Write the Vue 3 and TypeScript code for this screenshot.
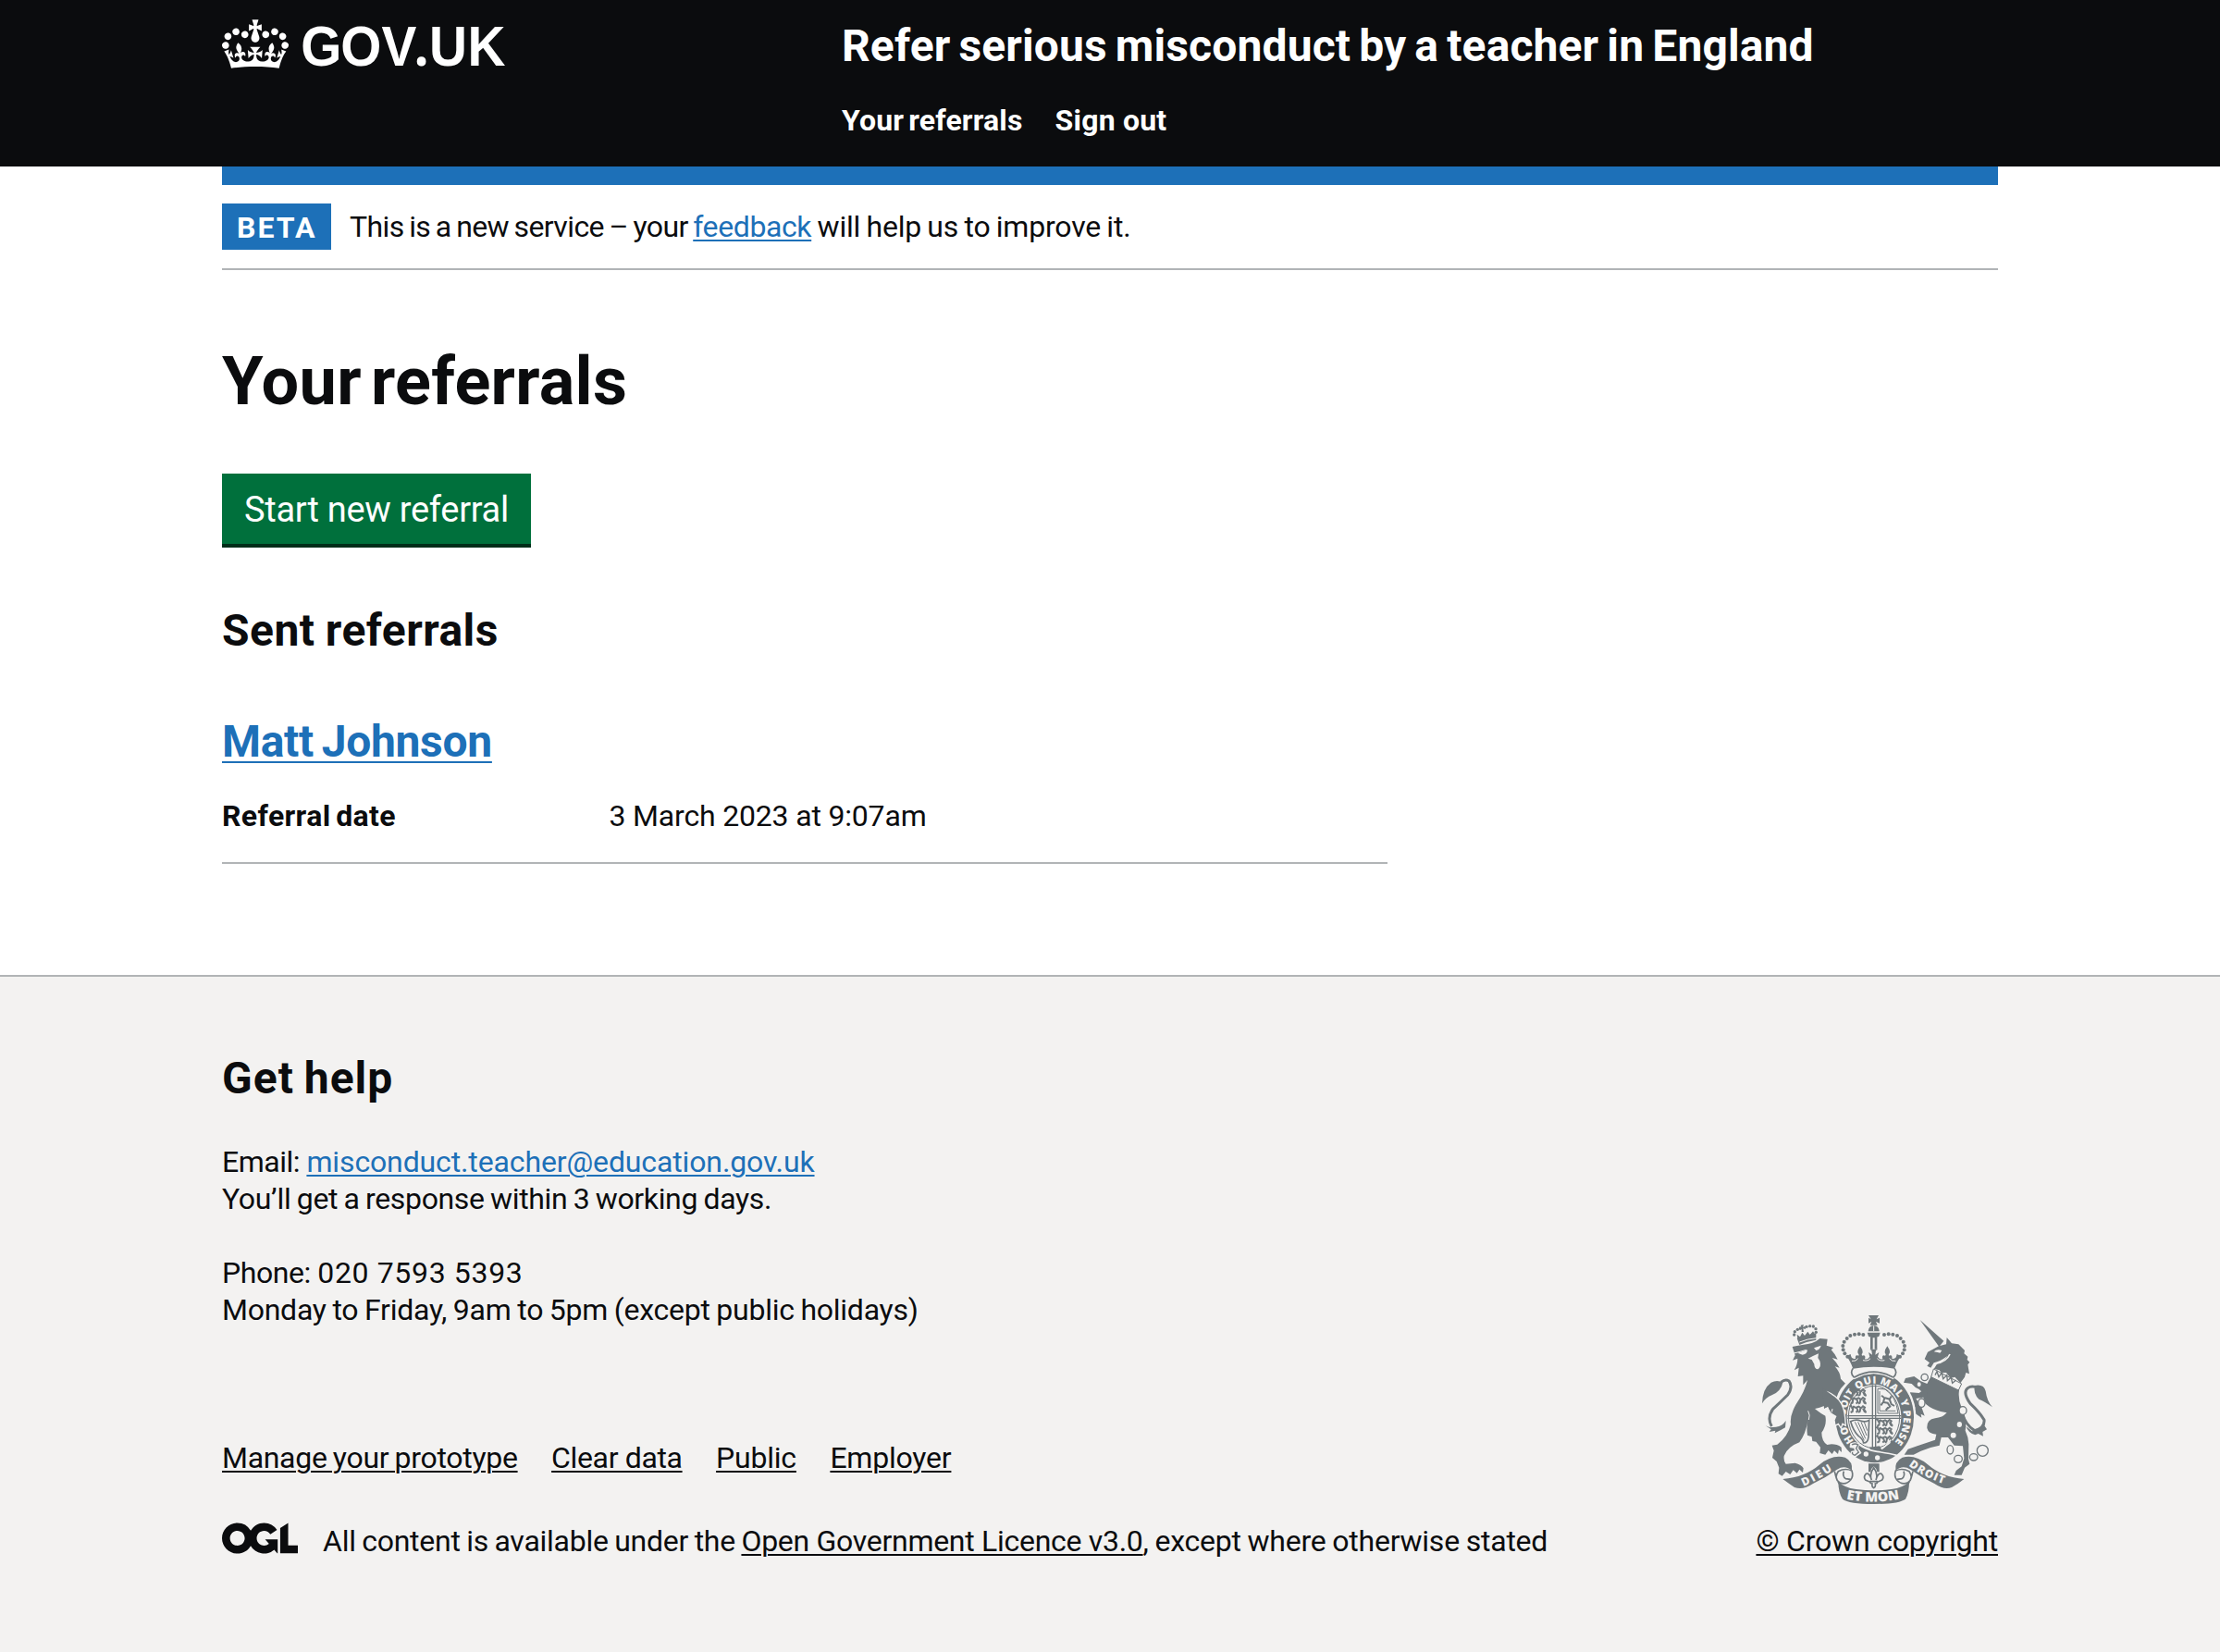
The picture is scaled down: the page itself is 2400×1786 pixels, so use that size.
<script setup lang="ts">
interface FooterLink {
  label: string
  key: string
}

const footerLinks: FooterLink[] = [
  { label: 'Manage your prototype', key: 'manage' },
  { label: 'Clear data', key: 'clear' },
  { label: 'Public', key: 'public' },
  { label: 'Employer', key: 'employer' },
]

// Pearls on the left arch of the royal crown; the right arch mirrors them.
const pearls: [number, number][] = [
  [403, 129], [389, 127], [375, 128], [361, 132], [350, 141],
  [341, 152], [337, 165], [338, 178], [343, 190], [352, 200],
]

const lionPearls: [number, number][] = [
  [179, 129], [181, 119], [190, 112], [230, 101], [241, 102], [249, 110], [250, 121], [199, 108], [219, 103],
]

const passant = [308, 334, 362]
</script>

<template>
  <header class="header">
    <div class="container header-row">
      <svg class="govuk-logo" viewBox="0 0 310 60" width="310" height="60" aria-label="GOV.UK">
        <g transform="translate(0 1.3) scale(.5455)" fill="#fff">
          <path
            d="M25 30.2c3.5 1.5 7.7-.2 9.1-3.7 1.5-3.6-.2-7.8-3.9-9.2-3.6-1.4-7.6.3-9.1 3.9-1.4 3.5.3 7.5 3.9 9zM9 39.5c3.6 1.5 7.8-.2 9.2-3.7 1.5-3.6-.2-7.8-3.9-9.1-3.6-1.5-7.6.2-9.1 3.8-1.4 3.5.3 7.5 3.8 9zM4.4 57.2c3.5 1.5 7.7-.2 9.1-3.8 1.5-3.6-.2-7.7-3.9-9.1-3.5-1.5-7.6.3-9.1 3.8-1.4 3.5.3 7.6 3.9 9.1zm38.3-21.4c3.5 1.5 7.7-.2 9.1-3.8 1.5-3.6-.2-7.7-3.9-9.1-3.6-1.5-7.6.3-9.1 3.8-1.3 3.6.4 7.7 3.9 9.1zm64.4-5.6c-3.6 1.5-7.8-.2-9.1-3.7-1.5-3.6.2-7.8 3.8-9.2 3.6-1.4 7.7.3 9.2 3.9 1.3 3.5-.4 7.5-3.9 9zm15.9 9.3c-3.6 1.5-7.7-.2-9.1-3.7-1.5-3.6.2-7.8 3.7-9.1 3.6-1.5 7.7.2 9.2 3.8 1.5 3.5-.3 7.5-3.8 9zm4.7 17.7c-3.6 1.5-7.8-.2-9.2-3.8-1.5-3.6.2-7.7 3.9-9.1 3.6-1.5 7.7.3 9.2 3.8 1.3 3.5-.4 7.6-3.9 9.1zM89.3 35.8c-3.6 1.5-7.8-.2-9.2-3.8-1.4-3.6.2-7.7 3.9-9.1 3.6-1.5 7.7.3 9.2 3.8 1.4 3.6-.3 7.7-3.9 9.1zM69.7 17.7l8.9 4.7V9.3l-8.9 2.8c-.2-.3-.5-.6-.9-.9L72.4 0H59.6l3.5 11.2c-.3.3-.6.5-.9.9l-8.8-2.8v13.1l8.8-4.7c.3.3.6.7.9.9l-5 15.4v.1c-.2.8-.4 1.6-.4 2.4 0 4.1 3.1 7.5 7 8.1h.2c.3 0 .7.1 1 .1.4 0 .7 0 1-.1h.2c4-.6 7.1-4.1 7.1-8.1 0-.8-.1-1.7-.4-2.4V34l-5.1-15.4c.4-.2.7-.6 1-.9zM66 92.8c16.9 0 32.8 1.1 47.1 3.2 4-16.9 8.9-26.7 14-33.5l-9.6-3.4c1 4.9 1.1 7.2 0 10.2-1.5-1.4-3-4.3-4.2-8.7L108.6 76c2.8-2 5-3.2 7.5-3.3-4.4 9.4-10 11.9-13.6 11.2-4.3-.8-6.3-4.6-5.6-7.9 1-4.7 5.7-5.9 8-.5 4.3-8.7-3-11.4-7.6-8.8 7.1-7.2 7.9-13.5 2.1-21.1-8 6.1-8.1 12.3-4.5 20.8-4.7-5.4-12.1-2.5-9.5 6.2 3.4-5.2 7.9-2 7.2 3.1-.6 4.3-6.4 7.8-13.5 7.2-10.3-.9-10.9-8-11.2-13.8 2.5-.5 7.1 1.8 11 7.3L80.2 60c-4.1 4.4-8 5.3-12.3 5.4 1.4-4.4 8-11.6 8-11.6H55.5s6.4 7.2 7.9 11.6c-4.2-.1-8-1-12.3-5.4l1.4 16.4c3.9-5.5 8.5-7.7 10.9-7.3-.3 5.8-.9 12.8-11.1 13.8-7.2.6-12.9-2.9-13.5-7.2-.7-5 3.8-8.3 7.1-3.1 2.7-8.7-4.6-11.6-9.4-6.2 3.7-8.5 3.6-14.7-4.6-20.8-5.8 7.6-5 13.9 2.2 21.1-4.7-2.6-11.9.1-7.7 8.8 2.3-5.5 7.1-4.2 8.1.5.7 3.3-1.3 7.1-5.7 7.9-3.5.7-9-1.8-13.5-11.2 2.5.1 4.7 1.3 7.5 3.3l-4.7-15.4c-1.2 4.4-2.7 7.2-4.3 8.7-1.1-3-.9-5.3 0-10.2l-9.5 3.4c5 6.9 9.9 16.7 14 33.5 14.8-2.1 30.8-3.2 47.7-3.2z"
          />
        </g>
        <text class="wordmark" transform="scale(.93 1)" x="91.8 137.8 185.6" y="51">GOV<tspan class="wordmark-dot" x="223.2">.</tspan><tspan x="240.9 285.6">UK</tspan></text>
      </svg>
      <div class="header-content">
        <a class="service-name">Refer serious misconduct by a teacher in England</a>
        <nav class="header-nav">
          <a class="nav-referrals">Your referrals</a>
          <a class="nav-signout">Sign out</a>
        </nav>
      </div>
    </div>
  </header>

  <div class="container">
    <div class="blue-bar"></div>
    <div class="phase-banner">
      <strong class="phase-tag">BETA</strong>
      <p class="phase-text"><span class="phase-before">This is a new service – your </span><a class="link phase-link">feedback</a><span class="phase-after"> will help us to improve it.</span></p>
    </div>

    <main class="main">
      <h1 class="title">Your referrals</h1>
      <button class="button" type="button">Start new referral</button>
      <h2 class="heading sent">Sent referrals</h2>
      <h2 class="heading person"><a class="link">Matt Johnson</a></h2>
      <dl class="summary">
        <dt class="summary-key">Referral date</dt>
        <dd class="summary-value">3 March 2023 at 9:07am</dd>
      </dl>
    </main>
  </div>

  <footer class="footer">
    <div class="container footer-row">
      <div class="footer-main">
        <h2 class="heading help">Get help</h2>
        <p class="line"><span class="email-label">Email: </span><a class="link email">misconduct.teacher@education.gov.uk</a></p>
        <p class="line response">You’ll get a response within 3 working days.</p>
        <p class="line phone"><span class="phone-label">Phone: </span>020 7593 5393</p>
        <p class="line hours">Monday to Friday, 9am to 5pm (except public holidays)</p>
        <ul class="footer-links">
          <li v-for="link in footerLinks" :key="link.key">
            <a class="footer-link" :class="link.key">{{ link.label }}</a>
          </li>
        </ul>
        <div class="licence">
          <svg class="ogl" viewBox="0 0 483.2 195.7" width="82" height="34" aria-hidden="true">
            <path
              fill="#0b0c0e"
              d="M421.5 142.8V.1l-50.7 32.3v161.1h112.4v-50.7zm-122.3-9.6A47.12 47.12 0 0 1 221 97.8c0-26 21.1-47.1 47.1-47.1 16.7 0 31.4 8.7 39.7 21.8l42.7-27.2A97.63 97.63 0 0 0 268.1 0c-36.5 0-68.3 20.1-85.1 49.7A98 98 0 0 0 97.8 0C43.9 0 0 43.9 0 97.8s43.9 97.8 97.8 97.8c36.5 0 68.3-20.1 85.1-49.7a97.76 97.76 0 0 0 149.6 25.4l19.4 22.2h3v-87.8h-80l24.3 27.5zM97.8 145c-26 0-47.1-21.1-47.1-47.1s21.1-47.1 47.1-47.1 47.1 21.1 47.1 47.1S123.8 145 97.8 145"
            />
          </svg>
          <p class="line"><span class="licence-before">All content is available under the </span><a class="footer-link ogl-link">Open Government Licence v3.0</a><span class="licence-after">, except where otherwise stated</span></p>
        </div>
      </div>

      <div class="copyright">
        <svg class="crest" viewBox="72 66 750 612" width="250" height="204" aria-hidden="true">
          <defs>
            <path id="garter" d="M440 507A94 110 0 0 1 440 287A94 110 0 0 1 440 507" />
            <path id="dieu" d="M209 621Q262 598 318 559" />
            <path id="droit" d="M550 553Q606 596 680 618" />
            <path id="etmon" d="M348 662Q437 680 530 660" />
            <g id="passant">
              <path d="M364 6l8-6 7 4 9-4 8 5 6-6 6 4-3 6 6 8M370 4l-2 12-6 3M382 4l3 9-5 6M394 5l-2 11-5 3M402 6l5 10 6 3" />
              <path d="M366 1l-5-3 4-4" />
            </g>
          </defs>

          <!-- Lion supporter -->
          <g class="ink">
            <path d="M173 168L184 166L205 162Q245 158 262 141L287 143L284 164L306 171L299 178Q312 192 320 209L302 204Q318 220 326 236L311 232Q328 250 330 272L345 287Q330 300 322 318L314 340Q338 366 346 402L345 425L335 420L331 432L322 418L313 424L311 408L316 395L300 384L303 374L292 376L288 362L276 368L276 360Q262 366 246 369Q264 384 280 392Q286 422 268 446Q268 474 286 486L300 484Q318 484 332 494L333 510L324 502L321 516L309 505L302 516L290 504L280 518L262 513L264 494L250 476L238 474L236 460L222 455Q218 430 224 406Q216 452 196 478Q158 492 146 522Q144 540 152 548L182 545Q202 550 209 562L207 576L196 566L188 578L176 568L166 582L152 573L140 587L128 580L130 560L122 540L108 528L113 505L107 488L124 485Q158 460 168 420Q164 392 184 356Q214 312 222 276L208 292L208 262L191 264L194 236L179 244Q190 226 190 206L174 212L182 196Z" />
            <path d="M75 352Q76 304 104 284Q124 274 142 284Q136 312 108 324Q84 334 75 352Z" />
            <path d="M86 424L100 430L120 428Q140 426 152 408L150 430Q134 440 116 448L118 440L98 444L104 436Z" />
          </g>
          <path class="stroke" stroke-width="9" d="M136 283Q150 272 162 279Q176 298 158 324Q132 350 110 370Q90 398 106 426" />
          <g class="paper">
            <path d="M190 188L222 178Q222 192 206 194Z" />
            <path d="M243 172L266 164Q262 178 250 180Z" />
            <path d="M224 206Q240 198 258 190L256 204L262 214Q268 232 256 241Q244 240 244 224L236 210Z" />
          </g>
          <path class="paper-line" stroke-width="3" d="M174 190Q200 184 218 178M226 405Q232 390 224 376" />
          <g class="ink">
            <path d="M188 140Q220 130 250 124L250 146Q222 150 196 162Z" />
            <path d="M200 98L210 96L207 104L215 101L216 111L208 109L210 120L203 120L203 111L196 113L195 105L202 105Z" />
            <path d="M190 142L188 128L198 136L205 122L213 132L223 119L230 129L240 118L248 130L246 140Z" />
            <circle v-for="([x, y], i) in lionPearls" :key="i" :cx="x" :cy="y" r="5" />
          </g>
          <path class="paper-line" stroke-width="3" d="M196 153Q222 142 252 140" />

          <!-- Unicorn supporter -->
          <g class="ink">
            <path d="M587 81L664 149L649 168Z" />
            <path d="M602 208L612 185L648 166L672 160L674 138L690 157L712 160L732 180L730 190L742 200L740 210L748 218L742 226L747 256L736 252L732 266L718 286L700 266L686 270L672 252L656 252L650 244L632 240L642 224Q664 218 676 198Q652 216 632 220L622 236L610 230L618 220Z" />
            <path d="M624 262L714 309Q710 340 722 366Q740 400 734 440Q744 460 745 484L744 532L748 548L732 560L722 584L698 584L704 570L722 556L730 530L726 490L698 488L678 462L656 462L650 488Q616 494 590 506L566 518L536 518L548 500L578 490L636 470L640 452Q614 450 610 432Q608 404 636 400Q660 398 674 382Q632 376 606 354Q594 340 600 320L584 306Q570 300 560 288L534 284L540 270L568 264L590 280L610 288Z" />
            <path d="M612 330L574 336L592 364L602 392L590 386L592 398L574 386L566 374L572 366L550 340L543 326L556 316L584 318L608 300Z" />
            <path d="M764 294Q794 288 800 312Q804 344 822 364Q798 346 778 338Q760 322 764 294Z" />
            <path d="M736 426L756 442L778 438L796 424L804 436L790 444L792 458L776 450L766 454Q744 448 736 426Z" />
          </g>
          <path class="stroke" stroke-width="9" d="M722 380Q736 424 764 440Q798 432 795 405Q782 382 750 352Q724 316 742 302Q752 294 766 298" />
          <path class="collar" d="M631 240L722 288L712 309L623 266Z" />
          <path class="stroke" stroke-width="4" d="M636 260l6-12 6 18 10-14 4 20 12-12 2 18 12-10 4 18 12-10" />
          <path class="paper" d="M632 184Q642 174 658 180L652 188L644 186Z" />
          <path class="paper-line" stroke-width="5" d="M640 222Q672 218 684 192" />
          <g class="paper">
            <ellipse cx="715" cy="420" rx="8" ry="9" />
            <ellipse cx="695" cy="455" rx="9" ry="9" />
            <ellipse cx="584" cy="290" rx="6" ry="7" />
          </g>
          <g class="link-ring">
            <ellipse cx="602" cy="267" rx="11" ry="11" />
            <ellipse cx="592" cy="350" rx="11" ry="14" />
            <ellipse cx="726" cy="375" rx="12" ry="13" />
            <ellipse cx="685" cy="502" rx="10" ry="14" />
            <ellipse cx="711" cy="532" rx="13" ry="12" />
            <ellipse cx="761" cy="526" rx="13" ry="11" />
            <circle cx="790" cy="505" r="18" />
          </g>

          <!-- Garter and shield -->
          <ellipse class="ring-halo" cx="440" cy="397" rx="130" ry="150" />
          <ellipse class="ink-fill" cx="440" cy="397" rx="127" ry="147" />
          <ellipse class="paper" cx="438" cy="396" rx="88" ry="106" />
          <ellipse class="stroke" cx="438" cy="396" rx="83" ry="101" stroke-width="3" />
          <g class="garter-text">
            <text><textPath href="#garter" startOffset="78" textLength="54">HO</textPath></text>
            <text><textPath href="#garter" startOffset="168" textLength="400">SOIT QUI MAL Y PENSE</textPath></text>
          </g>
          <path class="stroke" stroke-width="4" d="M433 292V498M443 292V498M352 392H526M352 400H526" />
          <g class="stroke" stroke-width="6">
            <use v-for="y in passant" :key="y" href="#passant" :y="y" />
            <use v-for="y in passant" :key="y" href="#passant" x="86" :y="y + 98" />
          </g>
          <path class="stroke" stroke-width="3" d="M450 304L474 306Q510 330 516 384H450ZM456 312V376H508" />
          <path class="stroke" stroke-width="6" d="M462 326l10 8-4 14 14 2 8 12-10 8M474 334l14 4 6 16 10 6M466 350l-6 8M488 340l6-12M484 364l-8 10" />
          <path class="stroke" stroke-width="5" d="M362 410Q380 402 394 408Q410 414 422 406L420 460Q418 480 404 480Q402 468 388 458Q370 440 362 410Z" />
          <path class="stroke" stroke-width="3" d="M376 412L406 472M386 412L410 466M396 412L414 456M406 412L416 440" />
          <path class="ink-fill" d="M422 494L456 490L466 508L430 506Z" />
          <path class="paper-line" stroke-width="5" d="M388 484Q410 502 448 508Q490 514 512 520M462 500Q484 484 492 470" />
          <path class="paper-stroke" stroke-width="3" d="M362 482Q376 476 388 482L386 498L396 512L376 526Q360 522 364 508L376 506L374 496L360 494Z" />
          <path class="stroke" stroke-width="4" d="M366 486Q378 480 386 486L380 498L388 510L376 520Q366 518 368 510" />
          <circle class="paper" cx="412" cy="516" r="8" />
          <circle class="paper" cx="449" cy="528" r="8" />

          <!-- Lion foreleg over the garter -->
          <path class="foreleg" d="M286 314Q316 326 332 352Q342 372 344 398L346 424L336 418L331 432L322 418L312 424L309 406L314 394L298 384L302 372L290 374Z" />
          <path class="ink-fill" d="M270 300L300 324L300 384L288 362L276 368Z" />

          <!-- Royal crown -->
          <path class="paper-stroke" stroke-width="3" d="M366 240Q437 226 508 240Q518 258 500 272Q437 236 374 272Q356 258 366 240Z" />
          <path class="stroke" stroke-width="5" d="M374 268Q358 254 370 238M500 268Q516 254 504 238M374 267Q437 232 500 267" />
          <g class="ink">
            <path d="M420 66H453L446 79L456 74V92L444 86L449 98H425L430 86L420 92V74L428 79Z" />
            <path d="M419 118Q420 100 437 99Q454 100 455 118Z" />
            <path d="M416 122H458L454 134Q437 144 420 134Z" />
            <path d="M426 138H434V176H426ZM440 138H448V176H440Z" />
            <path d="M348 198L362 192Q364 210 378 206Q376 194 384 196Q390 200 388 192Q380 184 393 166Q406 184 398 192Q398 200 404 196Q412 196 408 208Q418 210 424 200L420 186L432 194L430 180L424 176H450L444 180L442 194L454 186L450 200Q456 210 466 208Q462 196 470 196Q476 200 476 192Q468 184 481 166Q494 184 486 192Q484 200 490 196Q498 194 496 206Q510 210 512 192L526 198Q514 212 504 239Q437 227 370 239Q360 212 348 198Z" />
            <template v-for="([x, y], i) in pearls" :key="i">
              <circle :cx="x" :cy="y" r="6" />
              <circle :cx="874 - x" :cy="y" r="6" />
            </template>
          </g>
          <path class="paper-line" stroke-width="3" d="M437 100V117M366 214Q380 216 386 206M508 214Q494 216 488 206M402 212Q418 216 426 206M472 212Q456 216 448 206" />

          <!-- Motto scroll -->
          <path class="scroll" d="M142 597Q214 592 262 550Q302 516 344 527Q370 540 366 570Q344 550 318 566Q282 592 240 612Q208 634 180 624Q162 612 142 597Z" />
          <path class="scroll" d="M730 597Q660 592 612 550Q572 516 530 527Q504 540 508 570Q530 550 556 566Q592 592 634 612Q666 634 690 624Q712 612 730 597Z" />
          <path class="curl" d="M366 570Q344 560 322 572Q306 594 326 608Q346 618 362 600Q372 588 366 570ZM340 572Q334 588 346 596L362 598M310 572Q316 604 332 622" />
          <path class="curl" d="M508 570Q530 560 552 572Q568 594 548 608Q528 618 512 600Q502 588 508 570ZM534 572Q540 588 528 596L512 598M564 572Q558 604 542 622" />
          <path class="ink-fill" d="M322 604Q340 626 380 630Q437 638 494 630Q534 626 552 604Q552 642 540 662Q518 678 437 678Q356 678 336 662Q322 642 322 604Z" />
          <g class="motto">
            <text><textPath href="#dieu" textLength="108">DIEU</textPath></text>
            <text><textPath href="#droit" textLength="128">DROIT</textPath></text>
            <text class="mon"><textPath href="#etmon" textLength="174">ET MON</textPath></text>
          </g>
          <path class="ink-fill" d="M420 547H455V574H448Q446 562 437 556Q428 562 427 574H420Z" />
          <path class="curl" d="M437 560Q452 580 444 600Q450 576 462 580Q472 590 464 600L450 606Q448 612 442 612Q444 624 437 626Q430 624 432 612Q426 612 424 606L410 600Q402 590 412 580Q424 576 430 600Q422 580 437 560ZM424 605H450" />
        </svg>
        <a class="footer-link crown-link">© Crown copyright</a>
      </div>
    </div>
  </footer>
</template>

<style>
body {
  margin: 0;
  background: #f3f2f1;
}

#app {
  background: #fff;
  color: #0b0c0e;
  font-family: Roboto, 'Liberation Sans', sans-serif;
  font-size: 32px;
  line-height: 40px;
}
</style>

<style scoped>
.container {
  width: 1920px;
  margin: 0 auto;
}

p,
h1,
h2,
dl,
dd,
ul {
  margin: 0;
  padding: 0;
}

.header {
  height: 180px;
  background: #0b0c0e;
  color: #fff;
  font-weight: 700;
}

.header-row {
  display: flex;
  padding-top: 20px;
}

.govuk-logo {
  flex: none;
  margin-right: 360px;
  overflow: visible;
}

.wordmark {
  fill: #fff;
  font: 700 61px 'Liberation Sans', sans-serif;
}

.wordmark-dot {
  font-family: 'Open Sans', sans-serif;
}

.service-name {
  display: block;
  font-size: 48px;
  line-height: 60px;
  letter-spacing: 0.12px;
  word-spacing: -3px;
  white-space: nowrap;
}

.header-nav {
  display: flex;
  gap: 35px;
  margin-top: 30px;
}

.nav-referrals {
  letter-spacing: 0.15px;
  word-spacing: -3px;
}

.nav-signout {
  letter-spacing: 0.2px;
}

.blue-bar {
  height: 20px;
  background: #1d70b8;
}

.phase-banner {
  display: flex;
  align-items: center;
  gap: 20px;
  padding: 20px 0;
  border-bottom: 2px solid #b1b4b6;
}

.phase-tag {
  box-sizing: border-box;
  width: 118px;
  height: 50px;
  padding-left: 16px;
  background: #1d70b8;
  color: #fff;
  line-height: 52px;
  letter-spacing: 2px;
}

.phase-text {
  white-space: pre;
}

.phase-before {
  letter-spacing: -0.6px;
  word-spacing: -1.8px;
}

.phase-link {
  letter-spacing: -0.39px;
}

.phase-after {
  letter-spacing: -0.2px;
  word-spacing: -1.4px;
}

.link {
  color: #1d70b8;
}

.link,
.footer-link {
  text-decoration: underline;
  text-decoration-thickness: 2px;
  text-underline-offset: 3px;
}

.main {
  width: 1260px;
  padding-top: 81px;
}

.title {
  font-size: 72px;
  line-height: 80px;
  letter-spacing: 0.3px;
  word-spacing: -8px;
}

.button {
  display: block;
  width: 334px;
  height: 76px;
  margin: 59px 0 64px;
  padding: 0;
  border: 0;
  background: #00703c;
  box-shadow: 0 4px 0 #002d18;
  color: #fff;
  font: 400 38px/78px Roboto, 'Liberation Sans', sans-serif;
  letter-spacing: -0.28px;
}

.heading {
  font-size: 48px;
  line-height: 60px;
}

.sent {
  letter-spacing: 0.45px;
  word-spacing: -1px;
}

.person {
  margin-top: 60px;
  letter-spacing: -0.3px;
  word-spacing: -3px;
}

.person .link {
  text-underline-offset: 5px;
}

.summary {
  display: flex;
  margin-top: 30px;
  padding-bottom: 30px;
  border-bottom: 2px solid #b1b4b6;
}

.summary-key {
  width: 418.5px;
  font-weight: 700;
  letter-spacing: 0.35px;
  word-spacing: -2.6px;
}

.summary-value {
  letter-spacing: -0.18px;
}

.footer {
  box-sizing: border-box;
  height: 732px;
  margin-top: 120px;
  padding-top: 80px;
  border-top: 2px solid #b1b4b6;
  background: #f3f2f1;
}

.footer-row {
  display: flex;
  justify-content: space-between;
  align-items: flex-end;
}

.help {
  margin-bottom: 40px;
  letter-spacing: 1px;
  word-spacing: -2px;
}

.line {
  white-space: pre;
}

.email-label {
  letter-spacing: -0.5px;
}

.email {
  letter-spacing: -0.13px;
}

.response {
  letter-spacing: -0.35px;
  word-spacing: -1.2px;
}

.phone {
  margin-top: 40px;
  letter-spacing: 0.65px;
}

.phone-label {
  letter-spacing: -0.45px;
}

.hours {
  letter-spacing: -0.25px;
  word-spacing: -1px;
}

.footer-links {
  display: flex;
  gap: 36.5px;
  margin: 120px 0 50px;
  list-style: none;
}

.manage {
  letter-spacing: -0.3px;
  word-spacing: -1.35px;
}

.clear {
  letter-spacing: -0.36px;
}

.public,
.employer {
  letter-spacing: -0.22px;
}

.licence {
  display: flex;
  align-items: flex-start;
  gap: 27px;
}

.ogl {
  flex: none;
}

.licence-before {
  letter-spacing: -0.25px;
  word-spacing: -1.2px;
}

.ogl-link {
  letter-spacing: -0.29px;
}

.licence-after {
  letter-spacing: -0.25px;
  word-spacing: -0.8px;
}

.copyright {
  display: flex;
  flex-direction: column;
  align-items: flex-end;
  gap: 20px;
}

.crest {
  margin-right: 6px;
  overflow: visible;
}

.crown-link {
  letter-spacing: -0.2px;
}

.ink,
.ink-fill {
  fill: #6f777b;
}

.paper {
  fill: #f3f2f1;
}

.stroke,
.link-ring {
  fill: none;
  stroke: #6f777b;
}

.link-ring {
  fill: #f3f2f1;
  stroke-width: 4px;
}

.collar {
  fill: #f3f2f1;
  stroke: #6f777b;
  stroke-width: 3px;
}

.foreleg {
  fill: #6f777b;
  stroke: #f3f2f1;
  stroke-width: 4px;
}

.paper-line {
  fill: none;
  stroke: #f3f2f1;
}

.paper-stroke {
  fill: #f3f2f1;
  stroke: #f3f2f1;
}

.ring-halo {
  fill: none;
  stroke: #f3f2f1;
  stroke-width: 8px;
}

.scroll {
  fill: #6f777b;
}

.curl {
  fill: #f3f2f1;
  stroke: #6f777b;
  stroke-width: 5px;
}

.garter-text,
.motto {
  fill: #f3f2f1;
  font: 800 33px 'Open Sans', sans-serif;
}

.motto {
  font-size: 36px;
}

.mon {
  font-size: 43px;
}
</style>
